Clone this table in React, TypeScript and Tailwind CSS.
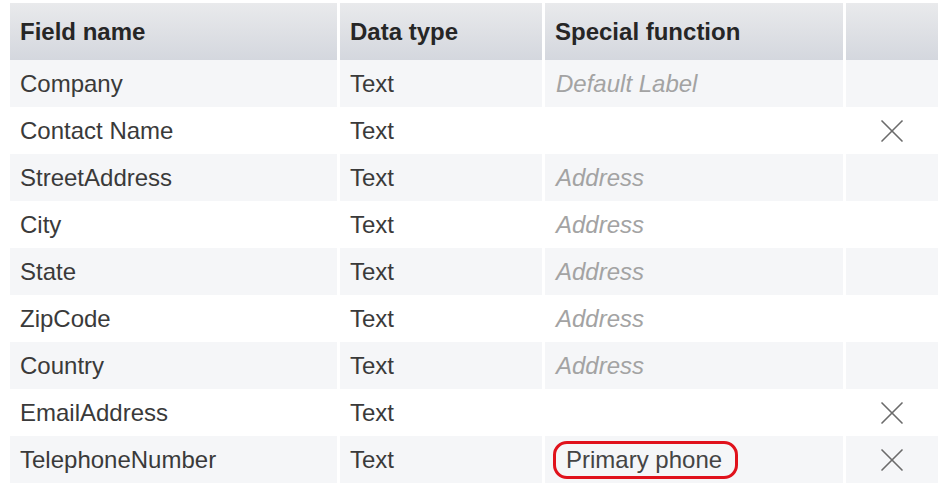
import { X } from "lucide-react";

type Row = {
  name: string;
  type: string;
  special?: string;
  highlight?: boolean;
  removable?: boolean;
};

const rows: Row[] = [
  { name: "Company", type: "Text", special: "Default Label" },
  { name: "Contact Name", type: "Text", removable: true },
  { name: "StreetAddress", type: "Text", special: "Address" },
  { name: "City", type: "Text", special: "Address" },
  { name: "State", type: "Text", special: "Address" },
  { name: "ZipCode", type: "Text", special: "Address" },
  { name: "Country", type: "Text", special: "Address" },
  { name: "EmailAddress", type: "Text", removable: true },
  { name: "TelephoneNumber", type: "Text", special: "Primary phone", highlight: true, removable: true },
];

export default function App() {
  return (
    <div
      className="w-[940px] h-[485px] bg-white overflow-hidden pt-[3px] pl-[10px] text-[24px] text-[#3a3a3a]"
      style={{ fontFamily: '"Liberation Sans", Arial, sans-serif' }}
    >
      <div className="grid grid-cols-[327px_202px_298px_92px] gap-x-[3px] w-[928px]">
        {/* Header */}
        {["Field name", "Data type", "Special function", ""].map((h, i) => (
          <div
            key={i}
            className="h-[57px] flex items-center pl-[10px] font-bold text-[#262626] bg-gradient-to-b from-[#e9eaec] to-[#d4d7de]"
          >
            {h}
          </div>
        ))}

        {rows.map((r, i) => {
          const bg = i % 2 === 0 ? "bg-[#f5f6f8]" : "bg-white";
          return [
            <div key={`${i}a`} className={`h-[47px] flex items-center pl-[10px] ${bg}`}>
              {r.name}
            </div>,
            <div key={`${i}b`} className={`h-[47px] flex items-center pl-[10px] ${bg}`}>
              {r.type}
            </div>,
            <div key={`${i}c`} className={`h-[47px] flex items-center ${bg}`}>
              {r.highlight ? (
                <span className="ml-[8px] border-[3px] border-[#e0121c] rounded-[14px] pl-[10px] pr-[13px] py-[2px] leading-[28px] text-[#444]">
                  {r.special}
                </span>
              ) : r.special ? (
                <span className="pl-[11px] italic text-[#a3a3a3]">{r.special}</span>
              ) : null}
            </div>,
            <div key={`${i}d`} className={`h-[47px] flex items-center justify-center ${bg}`}>
              {r.removable && <X size={40} strokeWidth={1} className="text-[#6b6b6b]" />}
            </div>,
          ];
        })}
      </div>
    </div>
  );
}
